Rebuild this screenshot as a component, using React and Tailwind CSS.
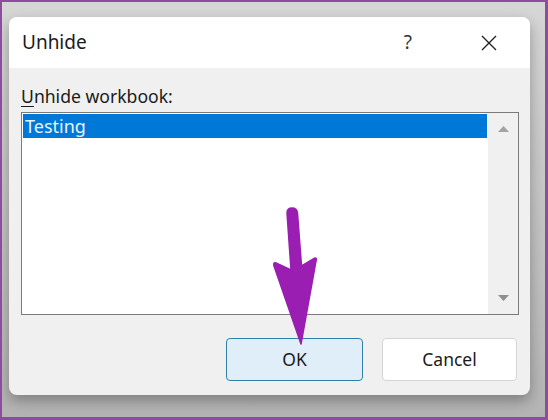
import React from "react";

const font = { fontFamily: '"Noto Sans", "Open Sans", sans-serif' };

function Arrow() {
  // hand-drawn annotation arrow pointing at the OK button
  return (
    <svg className="pointer-events-none absolute left-0 top-0" width="548" height="420" viewBox="0 0 548 420">
      <path
        d="M285 211 Q285 206 290 206 Q295 206 295.5 211 L299.5 264 L313 256 Q315 256 314 259 L299 342 L272 264 Q271 260 274 261 L289 268 Z"
        fill="#9a1eb1"
        stroke="#9a1eb1"
        strokeWidth="1.5"
        strokeLinejoin="round"
      />
    </svg>
  );
}

export default function App() {
  return (
    <div
      className="relative h-[420px] w-[548px] overflow-hidden border-b-[3px] border-l-2 border-r-[3px] border-t-2 border-[#8d4c9e] bg-gradient-to-b from-[#d6d6d6] to-[#b4b4b4] pl-[7px] pt-[15px]"
      style={font}
    >
      <div className="flex h-[378px] w-[521px] flex-col overflow-hidden rounded-lg bg-[#f0f0f0] shadow-[0_6px_14px_rgba(0,0,0,0.3)]">
        {/* title bar */}
        <div className="flex h-[51px] shrink-0 items-center bg-white pl-[13px] pr-[33px]">
          <p className="flex-1 text-[19px] text-[#1a1a1a]">Unhide</p>
          <span className="mr-[69px] text-[19px] text-[#333]">?</span>
          <svg width="16" height="16" viewBox="0 0 16 16">
            <path d="M1 1 L15 15 M15 1 L1 15" stroke="#222" strokeWidth="1.4" />
          </svg>
        </div>

        {/* body */}
        <div className="flex flex-1 flex-col px-[12px] pt-[16px]">
          <p className="mb-[4px] h-[24px] text-[17.6px] leading-[24px] text-[#1a1a1a]">
            <span className="underline underline-offset-[3px]">U</span>nhide workbook:
          </p>

          <div className="flex h-[203px] w-[498px] border border-[#7a7a7a] bg-white">
            <div className="flex-1 p-[1px]">
              <div className="flex h-[24px] items-center bg-[#0078d7] pl-[2px] text-[18px] text-[#e8f4ff]">Testing</div>
            </div>
            <div className="flex w-[30px] flex-col items-center justify-between bg-[#f0f0f0] py-[13px]">
              <svg width="11" height="6" viewBox="0 0 11 6">
                <path d="M5.5 0 L11 6 L0 6 Z" fill="#a3a3a3" />
              </svg>
              <svg width="11" height="6" viewBox="0 0 11 6">
                <path d="M0 0 L11 0 L5.5 6 Z" fill="#8f8f8f" />
              </svg>
            </div>
          </div>

          <div className="mt-[23px] flex justify-end gap-[19px] pr-[1px]">
            <button className="h-[43px] w-[137px] rounded-[4px] border border-[#2f7fa8] bg-[#e0eef9] text-[17.5px] text-[#1a1a1a]">
              OK
            </button>
            <button className="h-[43px] w-[135px] rounded-[4px] border border-[#d5d5d5] bg-white text-[17.5px] text-[#1a1a1a]">
              Cancel
            </button>
          </div>
        </div>
      </div>
      <Arrow />
    </div>
  );
}
